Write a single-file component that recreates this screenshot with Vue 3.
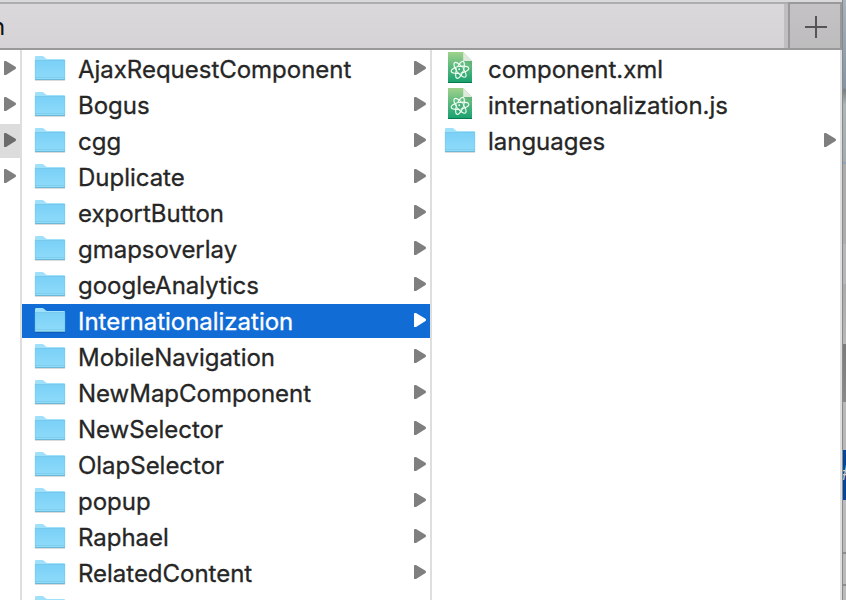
<script setup>
const folders = [
  'AjaxRequestComponent', 'Bogus', 'cgg', 'Duplicate', 'exportButton',
  'gmapsoverlay', 'googleAnalytics', 'Internationalization',
  'MobileNavigation', 'NewMapComponent', 'NewSelector', 'OlapSelector',
  'popup', 'Raphael', 'RelatedContent', ''
]
const selected = 'Internationalization'
const entries = [
  { name: 'component.xml', kind: 'file' },
  { name: 'internationalization.js', kind: 'file' },
  { name: 'languages', kind: 'folder' }
]
</script>

<template>
  <div class="screen">
    <svg class="defs" width="0" height="0" aria-hidden="true">
      <defs>
        <linearGradient id="folderFill" x1="0" y1="0" x2="0" y2="1">
          <stop offset="0" stop-color="#7bd1f7" />
          <stop offset="1" stop-color="#8fdbfa" />
        </linearGradient>
        <linearGradient id="fileFill" x1="0" y1="0" x2="0" y2="1">
          <stop offset="0" stop-color="#9fd28c" />
          <stop offset="0.5" stop-color="#58b77c" />
          <stop offset="1" stop-color="#16a06f" />
        </linearGradient>
        <symbol id="folder" viewBox="0 0 32 28">
          <path d="M1 24H31V25H1Z" fill="#000" opacity=".14" />
          <path d="M1 1.3Q1 0 2.2 0H8.2Q9.3 0 10.2 .9L11.6 2.3Q12.3 3 13.2 3H30Q31 3 31 4V24H1Z" fill="#9fe0fb" />
          <path d="M1 5H31V23.5H1Z" fill="url(#folderFill)" />
          <path d="M1 4.5H31" stroke="#6fc3e8" stroke-width=".8" />
          <path d="M1 21.5H31" stroke="#74c6e9" stroke-width=".6" />
          <path d="M1 23.5H31" stroke="#68b3d2" stroke-width=".9" />
          <path d="M1.2 4V23.5M30.8 4V23.5" stroke="#70c4e8" stroke-width=".5" />
        </symbol>
        <symbol id="file" viewBox="0 0 24 32">
          <path d="M0 0H15.2L24 9V31H0Z" fill="url(#fileFill)" />
          <path d="M0 30.5H24" stroke="#087a52" />
          <path d="M15.2 0L24 9H15.2Z" fill="#dfe9dc" />
          <path d="M15.2 9H24V13Z" fill="#2f8f62" opacity=".22" />
          <g fill="none" stroke="#f3fff8" stroke-width="1.15">
            <ellipse cx="12" cy="17.8" rx="3.3" ry="9" transform="rotate(20 12 17.8)" />
            <ellipse cx="12" cy="17.8" rx="3.3" ry="9" transform="rotate(-38 12 17.8)" />
            <ellipse cx="12" cy="17.8" rx="3.3" ry="9" transform="rotate(80 12 17.8)" />
          </g>
          <path d="M8.8 15.2H14.4L15.2 18.2L12 21.6L9 19Z" fill="#4bb078" />
          <circle cx="11.2" cy="17.2" r=".9" fill="#f3fff8" />
        </symbol>
        <symbol id="arrow" viewBox="0 0 12 14">
          <path d="M0 .6Q0 0 .8 0H2L11.5 5.8Q12.5 6.9 11.5 8L2 14H.8Q0 14 0 13.4Z" fill="currentColor" />
        </symbol>
      </defs>
    </svg>

    <div class="window">
      <header class="tabs">
        <div class="tab"><span>n</span></div>
        <div class="gutter"></div>
        <button class="add" aria-label="New tab">
          <svg width="22" height="22" viewBox="0 0 22 22"><path d="M0 11H22M11 0V22" stroke="#555" stroke-width="2" /></svg>
        </button>
      </header>
      <main class="columns">
        <section class="parent">
          <div v-for="n in 4" :key="n" class="row" :class="{ active: n === 3 }">
            <svg class="arrow"><use href="#arrow" /></svg>
          </div>
        </section>
        <section class="list">
          <div v-for="name in folders" :key="name" class="row" :class="{ selected: name === selected }">
            <svg class="folder"><use href="#folder" /></svg>
            <span class="label">{{ name }}</span>
            <svg class="arrow"><use href="#arrow" /></svg>
          </div>
        </section>
        <section class="list">
          <div v-for="entry in entries" :key="entry.name" class="row">
            <svg :class="entry.kind"><use :href="'#' + entry.kind" /></svg>
            <span class="label">{{ entry.name }}</span>
            <svg v-if="entry.kind === 'folder'" class="arrow"><use href="#arrow" /></svg>
          </div>
        </section>
      </main>
    </div>

    <aside class="behind">
      <div class="sky"></div>
      <div class="grey"></div>
      <div class="pale"></div>
      <div class="dark"></div>
      <div class="light"></div>
      <div class="blue"><span>#</span></div>
      <div class="rest"></div>
      <div class="rest"></div>
      <div class="rest"></div>
    </aside>
  </div>
</template>

<style>
body { margin: 0; overflow: hidden; }
</style>

<style scoped>
.screen {
  display: flex;
  width: 846px;
  height: 600px;
  overflow: hidden;
  background: #fff;
  color: #262626;
  font: 24px/34px Inter, "Liberation Sans", sans-serif;
}
.defs { position: absolute; }
svg { display: block; flex: none; }
.window { width: 842px; height: 600px; flex: none; display: flex; flex-direction: column; }
.tabs {
  box-sizing: border-box;
  height: 50px;
  flex: none;
  display: flex;
  border-bottom: 2px solid #999;
  background: linear-gradient(#d9d8da 2px, #aeadae 2px, #aeadae 4px, #dad8da 4px, #d5d3d6);
}
.tab { width: 784px; overflow: hidden; }
.tab span { display: block; margin: 10px 0 0 -9px; color: #111; }
.gutter { width: 4px; margin-top: 4px; background: #c0bec0; }
.add {
  box-sizing: border-box;
  width: 54px;
  height: 46px;
  margin-top: 2px;
  padding: 2px 0 0 2px;
  display: flex;
  align-items: center;
  justify-content: center;
  border: 2px solid #999;
  border-bottom: 0;
  border-radius: 0;
  background: linear-gradient(#c4c2c4, #bebdbe);
}
.columns { display: flex; flex: 1; min-height: 0; }
.parent, .list {
  box-sizing: border-box;
  overflow: hidden;
  padding-top: 2px;
  border-right: 2px solid #dedede;
}
.parent { width: 22px; }
.list { width: 410px; }
.row { display: flex; height: 34px; margin-bottom: 2px; }
.parent .row { padding-left: 4px; }
.list .row { padding-left: 12px; }
.active { background: #dcdcdc; }
.arrow { width: 12px; height: 14px; margin: 9px 4px 0 auto; color: #7f7f7f; }
.parent .arrow { margin: 9px 0 0; }
.active .arrow { color: #6b6b6b; }
.folder { width: 32px; height: 28px; margin: 4px 12px 0 0; }
.file { width: 24px; height: 32px; margin: 0 16px 0 4px; }
.label { padding-top: 1px; white-space: nowrap; letter-spacing: -.02px; -webkit-text-stroke: .3px currentColor; }
.selected { background: #116cd6; color: #fff; }
.selected .arrow { color: #fff; }
.behind {
  box-sizing: border-box;
  width: 4px;
  flex: none;
  border-left: 1px solid #858b8b;
  background: #b4b5b6;
  overflow: hidden;
}
.sky { height: 162px; border-bottom: 2px solid #91a4b8; background: linear-gradient(#a7b3bc, #8494a3 88px, #777f80 90px, #adb5b6 105px, #a4acb0); }
.grey { height: 80px; background: #acacac; }
.pale { height: 100px; background: linear-gradient(#b6b6b8 40px, #aaa 40px, #b7b7b7); }
.dark { height: 58px; background: linear-gradient(#7b7b7b, #898989); }
.light { height: 48px; background: #b8b8b8; }
.blue { height: 50px; overflow: hidden; background: #07459a; color: #d4cec5; font: 22px/50px "Liberation Mono", monospace; }
.blue span { display: block; margin-left: -2px; }
.rest { box-sizing: border-box; height: 54px; border-bottom: 2px solid #8e8e8e; background: #bbb; }
.rest + .rest { height: 32px; }
</style>
